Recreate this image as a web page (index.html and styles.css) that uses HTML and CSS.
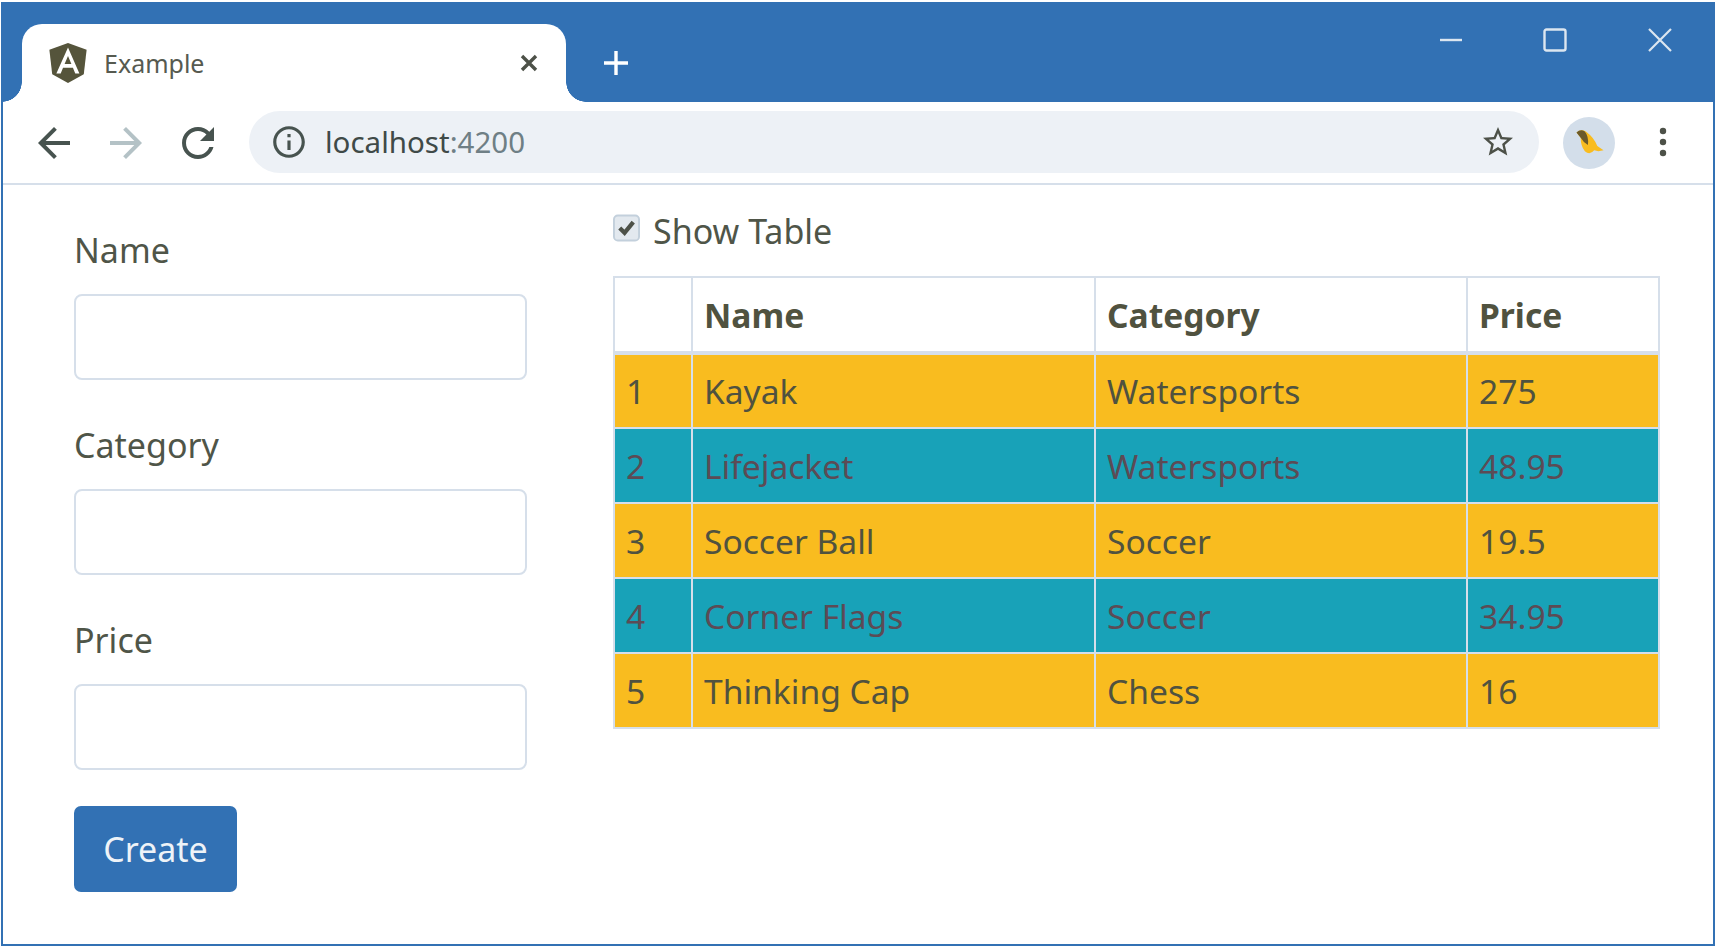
FILE: index.html
```html
<!DOCTYPE html>
<html lang="en">

<head>
    <meta charset="UTF-8">
    <title>Example</title>
    <link rel="stylesheet" href="styles.css">
</head>

<body>
    <div class="window">
        <header class="titlebar">
            <div class="tab">
                <svg class="tab-logo" viewBox="31 30 188 200">
                    <path fill="#55543b" d="M125 30L31.9 63.2l14.2 123.1L125 230l78.9-43.7 14.2-123.1z"/>
                    <path fill="#fff" d="M125 52.1L66.8 182.6h21.7l11.7-29.2h49.4l11.7 29.2H182L125 52.1zm17 83.3h-34l17-40.9 17 40.9z"/>
                </svg>
                <span class="tab-title">Example</span>
                <svg class="tab-close" viewBox="0 0 20 20">
                    <path d="M3 3L17 17M17 3L3 17" stroke="#4d5148" stroke-width="3.4" fill="none"/>
                </svg>
            </div>
            <svg class="new-tab" viewBox="0 0 24 24">
                <path d="M12 0V24M0 12H24" stroke="#fff" stroke-width="3.4" fill="none"/>
            </svg>
            <div class="window-controls">
                <svg viewBox="0 0 24 24"><path d="M2 12H24" stroke="#dce6f0" stroke-width="2.4" fill="none"/></svg>
                <svg viewBox="0 0 24 24"><rect x="1.5" y="1.5" width="21" height="21" rx="2" stroke="#dce6f0" stroke-width="2.4" fill="none"/></svg>
                <svg viewBox="0 0 24 24"><path d="M1 1L23 23M23 1L1 23" stroke="#dce6f0" stroke-width="2.2" fill="none"/></svg>
            </div>
        </header>

        <nav class="toolbar">
            <svg class="nav-icon" viewBox="0 0 24 24"><path fill="#47534f" d="M20 11H7.83l5.59-5.59L12 4l-8 8 8 8 1.41-1.41L7.83 13H20v-2z"/></svg>
            <svg class="nav-icon" viewBox="0 0 24 24"><path fill="#b4c2c6" d="M4 11h12.17l-5.59-5.59L12 4l8 8-8 8-1.41-1.41L16.17 13H4v-2z"/></svg>
            <svg class="nav-icon" viewBox="0 0 24 24"><path fill="#47534f" d="M17.65 6.35C16.2 4.9 14.21 4 12 4c-4.42 0-7.99 3.58-7.99 8s3.57 8 7.99 8c3.73 0 6.84-2.55 7.73-6h-2.08c-.82 2.33-3.04 4-5.65 4-3.31 0-6-2.69-6-6s2.69-6 6-6c1.66 0 3.14.69 4.22 1.78L13 11h7V4l-2.35 2.35z"/></svg>
            <div class="omnibox">
                <svg class="info-icon" viewBox="0 0 24 24"><path fill="#47534f" d="M11 7h2v2h-2zm0 4h2v6h-2zm1-9C6.48 2 2 6.48 2 12s4.48 10 10 10 10-4.48 10-10S17.52 2 12 2zm0 18c-4.41 0-8-3.59-8-8s3.59-8 8-8 8 3.59 8 8-3.59 8-8 8z"/></svg>
                <span class="url">localhost<span class="url-port">:4200</span></span>
                <svg class="star-icon" viewBox="0 0 24 24"><path fill="#4d5148" d="M22 9.24l-7.19-.62L12 2 9.19 8.63 2 9.24l5.46 4.73L5.82 21 12 17.27 18.18 21l-1.63-7.03L22 9.24zM12 15.4l-3.76 2.27 1-4.28-3.32-2.88 4.38-.38L12 6.1l1.71 4.04 4.38.38-3.32 2.88 1 4.28L12 15.4z"/></svg>
            </div>
            <svg class="avatar" viewBox="0 0 50 50">
                <circle cx="25" cy="25" r="25" fill="#d3deea"/>
                <path fill="#f9bc1f" d="M13 15Q17 11 22 14Q30 20 33 28L39 32L34 33L30 32Q26 37 21 33Q17 28 17 20Z"/>
                <path fill="#6b5a2a" d="M13 15Q17 11 21 14Q25 19 24 27Q20 25 17 20Z"/>
            </svg>
            <svg class="menu-icon" viewBox="0 0 8 32">
                <circle cx="4" cy="4" r="3.2" fill="#4d5148"/>
                <circle cx="4" cy="15" r="3.2" fill="#4d5148"/>
                <circle cx="4" cy="26" r="3.2" fill="#4d5148"/>
            </svg>
        </nav>

        <main class="page">
            <form class="product-form">
                <label class="field-label">Name</label>
                <input class="field-input" type="text">
                <label class="field-label">Category</label>
                <input class="field-input" type="text">
                <label class="field-label">Price</label>
                <input class="field-input" type="text">
                <button class="create-btn" type="button">Create</button>
            </form>

            <section class="table-area">
                <div class="show-table">
                    <svg class="check-box" viewBox="0 0 28 28">
                        <rect x="1" y="1" width="26" height="26" rx="4" fill="#e3e9ef" stroke="#c3d0dc" stroke-width="2"/>
                        <path d="M7 14L12 19L21 8" stroke="#4d5148" stroke-width="4.4" fill="none"/>
                    </svg>
                    <span>Show Table</span>
                </div>

                <table class="products">
                    <colgroup>
                        <col class="col-num">
                        <col class="col-name">
                        <col class="col-cat">
                        <col class="col-price">
                    </colgroup>
                    <thead>
                        <tr><th></th><th>Name</th><th>Category</th><th>Price</th></tr>
                    </thead>
                    <tbody>
                        <tr class="row-odd"><td>1</td><td>Kayak</td><td>Watersports</td><td>275</td></tr>
                        <tr class="row-even"><td>2</td><td>Lifejacket</td><td>Watersports</td><td>48.95</td></tr>
                        <tr class="row-odd"><td>3</td><td>Soccer Ball</td><td>Soccer</td><td>19.5</td></tr>
                        <tr class="row-even"><td>4</td><td>Corner Flags</td><td>Soccer</td><td>34.95</td></tr>
                        <tr class="row-odd"><td>5</td><td>Thinking Cap</td><td>Chess</td><td>16</td></tr>
                    </tbody>
                </table>
            </section>
        </main>
    </div>
</body>

</html>
```
FILE: styles.css
```css
* {
    box-sizing: border-box;
}

html, body {
    margin: 0;
    padding: 0;
    background-color: #ffffff;
}

body {
    padding: 2px 1px;
    font-family: 'Noto Sans', sans-serif;
    color: #4f5548;
}

.window {
    height: 944px;
    border: 2px solid #3271b4;
    background-color: #ffffff;
}

/* title bar */

.titlebar {
    display: flex;
    align-items: flex-start;
    height: 98px;
    background-color: #3271b4;
}

.tab {
    position: relative;
    display: flex;
    align-items: center;
    width: 544px;
    height: 78px;
    margin-top: 20px;
    margin-left: 19px;
    padding: 0 27px 0 27px;
    background-color: #ffffff;
    border-radius: 20px 20px 0 0;
}

.tab::before,
.tab::after {
    content: "";
    position: absolute;
    bottom: 0;
    width: 20px;
    height: 20px;
}

.tab::before {
    left: -20px;
    background: radial-gradient(circle at 0 0, #3271b4 19.5px, #ffffff 20px);
}

.tab::after {
    right: -20px;
    background: radial-gradient(circle at 100% 0, #3271b4 19.5px, #ffffff 20px);
}

.tab-logo {
    width: 38px;
    height: 40px;
}

.tab-title {
    margin-left: 17px;
    font-size: 25px;
    color: #565a50;
}

.tab-close {
    width: 20px;
    height: 20px;
    margin-left: auto;
}

.new-tab {
    width: 24px;
    height: 24px;
    margin-top: 47px;
    margin-left: 38px;
}

.window-controls {
    display: flex;
    gap: 81px;
    margin-top: 24px;
    margin-left: auto;
    margin-right: 41px;
}

.window-controls svg {
    width: 24px;
    height: 24px;
}

/* toolbar */

.toolbar {
    display: flex;
    align-items: center;
    height: 83px;
    padding-left: 27px;
    border-bottom: 2px solid #d6dfea;
}

.nav-icon {
    width: 48px;
    height: 48px;
    margin-right: 24px;
}

.omnibox {
    display: flex;
    align-items: center;
    width: 1290px;
    height: 62px;
    margin-left: 3px;
    margin-bottom: 2px;
    padding: 0 23px 0 21px;
    background-color: #edf1f6;
    border-radius: 31px;
}

.info-icon {
    width: 38px;
    height: 38px;
}

.url {
    margin-left: 17px;
    font-size: 29.5px;
    color: #3f4a48;
}

.url-port {
    color: #6f7f85;
}

.star-icon {
    width: 36px;
    height: 36px;
    margin-left: auto;
}

.avatar {
    width: 52px;
    height: 52px;
    margin-left: 24px;
}

.menu-icon {
    width: 8px;
    height: 32px;
    margin-left: 44px;
}

/* page */

.page {
    display: flex;
    align-items: flex-start;
    padding-left: 71px;
}

.product-form {
    display: flex;
    flex-direction: column;
    width: 453px;
    padding-top: 41px;
}

.field-label {
    height: 48px;
    margin-bottom: 20px;
    font-size: 34px;
    line-height: 48px;
}

.field-input {
    height: 86px;
    margin-bottom: 41px;
    border: 2px solid #d6dfea;
    border-radius: 8px;
    background-color: #ffffff;
}

.product-form .field-input:nth-of-type(3) {
    margin-bottom: 36px;
}

.create-btn {
    width: 163px;
    height: 86px;
    border: none;
    border-radius: 7px;
    background-color: #3271b4;
    color: #eef3f8;
    font-family: inherit;
    font-size: 34px;
}

.table-area {
    width: 1045px;
    margin-left: 86px;
    padding-top: 22px;
}

.show-table {
    display: flex;
    align-items: center;
    gap: 13px;
    height: 48px;
    margin-bottom: 21px;
    font-size: 34px;
}

.check-box {
    width: 27px;
    height: 28px;
    margin-top: -6px;
}

.products {
    width: 1045px;
    table-layout: fixed;
    border-collapse: collapse;
    font-size: 33.6px;
}

.col-num {
    width: 78px;
}

.col-name {
    width: 403px;
}

.col-cat {
    width: 372px;
}

.col-price {
    width: 192px;
}

.products th,
.products td {
    height: 75px;
    padding: 0 11px;
    border: 2px solid #d6dfea;
    text-align: left;
}

.products th {
    height: 76px;
    border-bottom-width: 4px;
    color: #50523f;
    font-weight: 700;
}

.row-odd {
    background-color: #f9bc1f;
    color: #50523f;
}

.row-even {
    background-color: #18a2b8;
    color: #5c4b55;
}
```
